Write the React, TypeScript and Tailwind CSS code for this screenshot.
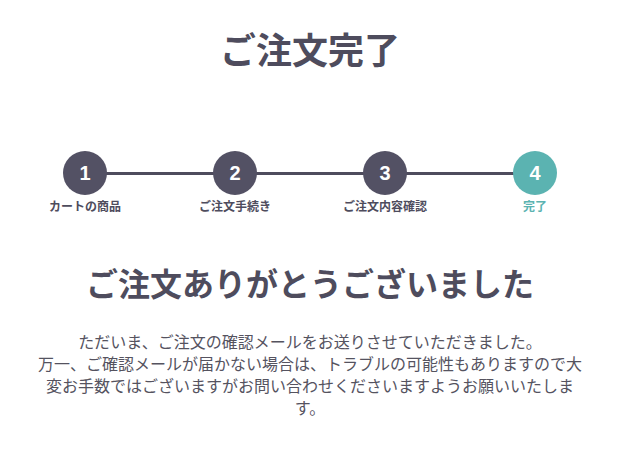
const steps = [
  { no: 1, label: "カートの商品" },
  { no: 2, label: "ご注文手続き" },
  { no: 3, label: "ご注文内容確認" },
  { no: 4, label: "完了" }
];

const current = 4;

export default function App() {
  return (
    <main
      className="min-h-screen bg-white px-[35px] pb-10 pt-[21px] text-[#4e4c5d]"
      style={{ fontFamily: '"Noto Sans CJK JP", "Liberation Sans", sans-serif' }}
    >
      <h1 className="text-center text-[36px] font-bold leading-[54px]">
        ご注文完了
      </h1>

      <ol className="relative -mx-[25px] mt-[76px] grid grid-cols-4">
        <span className="absolute left-[75px] right-[75px] top-[21px] h-[3px] bg-[#4e4c5d]" />
        {steps.map((step) => {
          const active = step.no === current;
          return (
            <li key={step.no} className="relative flex flex-col items-center">
              <span
                className={`flex h-11 w-11 items-center justify-center rounded-full font-['Liberation_Sans',sans-serif] text-[20px] font-bold text-white ${
                  active ? "bg-[#5bb3b1]" : "bg-[#535164]"
                }`}
              >
                {step.no}
              </span>
              <span
                className={`mt-[3px] text-[12px] font-bold leading-4 ${
                  active ? "text-[#5bb3b1]" : "text-[#4e4c5d]"
                }`}
              >
                {step.label}
              </span>
            </li>
          );
        })}
      </ol>

      <h2 className="mt-[44px] text-center text-[32px] font-bold leading-[48px]">
        ご注文ありがとうございました
      </h2>

      <p className="mt-[24px] text-center text-[16px] leading-[22px] text-[#55535f]">
        ただいま、ご注文の確認メールをお送りさせていただきました。
        <br />
        万一、ご確認メールが届かない場合は、トラブルの可能性もありますので大変お手数ではございますがお問い合わせくださいますようお願いいたします。
      </p>
    </main>
  );
}
